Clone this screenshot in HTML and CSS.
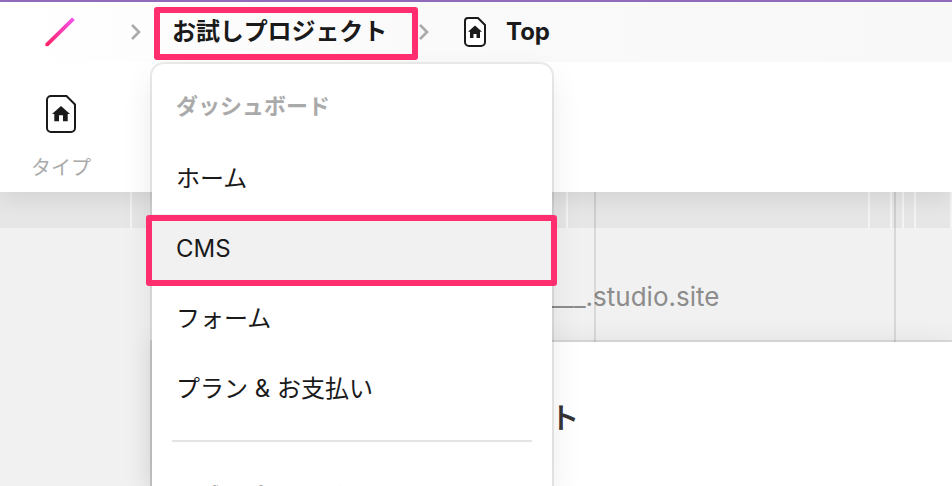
FILE: index.html
```
<!DOCTYPE html>
<html lang="ja">
<head>
<meta charset="utf-8">
<title>Studio</title>
<link rel="stylesheet" href="styles.css">
</head>
<body>
<div class="app">
  <header class="topbar">
    <svg class="logo" width="32" height="32" viewBox="0 0 32 32"><defs><linearGradient id="g" x1="0" y1="1" x2="1" y2="0"><stop offset="0" stop-color="#ff2060"/><stop offset="1" stop-color="#f552f4"/></linearGradient></defs><path d="M1.4 27.5 28 1.4l2.8 2.6L4.1 30.2 1.4 30z" fill="url(#g)"/></svg>
    <svg class="chevron" width="12" height="18" viewBox="0 0 12 18"><path d="m2 2 7 7-7 7"/></svg>
    <span class="project">お試しプロジェクト</span>
    <svg class="chevron second" width="12" height="18" viewBox="0 0 12 18"><path d="m2 2 7 7-7 7"/></svg>
    <svg class="page-icon" width="22" height="30" viewBox="0 0 22 30"><path class="sheet" d="M4 1h10l7 7v17a4 4 0 0 1-4 4H5a4 4 0 0 1-4-4V4a3 3 0 0 1 3-3z"/><path d="m11 8.5 7 6.2h-2v6.3h-3.5v-4h-3v4H6v-6.3H4z"/></svg>
    <span class="page-name">Top</span>
  </header>
  <section class="toolbar">
    <div class="type">
      <svg class="type-icon" width="30" height="38" viewBox="0 0 30 38"><path class="sheet" d="M5 1h15.5l8.5 8.5V33a4 4 0 0 1-4 4H5a4 4 0 0 1-4-4V5a4 4 0 0 1 4-4z"/><path d="m15 11 9 8h-2.3v7.3H17v-6h-4v6H8.3V19H6z"/></svg>
      <span class="type-label">タイプ</span>
    </div>
  </section>
  <main class="canvas">
    <div class="ruler"><i class="r1"></i><i class="r2"></i><i class="r3"></i><i class="r4"></i><i class="r5"></i><i class="r6"></i><i class="r7"></i></div>
    <div class="address">___.studio.site</div>
    <div class="guide g1"></div>
    <div class="guide g2"></div>
    <div class="artboard"><span>ト</span></div>
  </main>
</div>
<nav class="menu">
  <div class="heading">ダッシュボード</div>
  <div class="item">ホーム</div>
  <div class="item active">CMS</div>
  <div class="item">フォーム</div>
  <div class="item">プラン &amp; お支払い</div>
  <hr>
  <div class="heading next">お試しプロジェクト</div>
</nav>
<div class="mark mark-project"></div>
<div class="mark mark-cms"></div>
</body>
</html>
```
FILE: styles.css
```
* { box-sizing: border-box; }
body {
  margin: 0;
  width: 952px;
  height: 486px;
  overflow: hidden;
  position: relative;
  color: #1a1a1a;
  background: #f1f1f1;
  font-family: Inter, "Noto Sans CJK JP", sans-serif;
}
svg { display: block; flex: none; }
.app { height: 486px; display: flex; flex-direction: column; }
.topbar {
  height: 62px;
  flex: none;
  display: flex;
  align-items: center;
  padding-left: 44px;
  position: relative;
  z-index: 2;
  border-top: 2px solid #916bb9;
  background: linear-gradient(90deg, #fff 0, #fafafa 400px, #f8f8f8);
  white-space: nowrap;
}
.logo { margin-right: 54px; }
.chevron { fill: none; stroke: #aaa; stroke-width: 2.6; }
.project { width: 245px; padding-left: 30px; font-size: 24px; font-weight: 700; line-height: 36px; letter-spacing: -0.1px; }
.second { margin-left: 31px; }
.page-icon { margin-left: 34px; fill: #1a1a1a; }
.sheet { fill: #fff; stroke: #1a1a1a; stroke-width: 2; }
.page-name { margin-left: 20px; padding-bottom: 1px; font-size: 24px; font-weight: 700; }
.toolbar {
  height: 130px;
  flex: none;
  background: #fff;
  position: relative;
  z-index: 1;
  box-shadow: 0 4px 24px rgba(0, 0, 0, .1);
}
.type { width: 122px; padding-top: 33px; display: flex; flex-direction: column; align-items: center; }
.type-icon { fill: #1a1a1a; }
.type-label { margin-top: 20px; font-size: 20px; line-height: 30px; color: #aaa; }
.canvas { flex: 1; min-height: 0; position: relative; display: flex; flex-direction: column; }
.ruler { height: 36px; flex: none; background: #e6e6e6; position: relative; }
.ruler i { position: absolute; top: 0; width: 2px; height: 36px; background: #f4f4f4; }
.ruler .r1 { left: 130px; }
.ruler .r2 { left: 566px; }
.ruler .r3 { left: 868px; }
.ruler .r4 { left: 890px; }
.ruler .r5 { left: 902px; }
.ruler .r6 { left: 914px; }
.ruler .r7 { left: 950px; }
.address { height: 114px; flex: none; padding: 53px 0 0 550px; font-size: 26px; line-height: 32px; color: #8c8c8c; }
.guide { position: absolute; top: 0; width: 2px; height: 150px; background: rgba(0, 0, 0, .1); }
.g1 { left: 594px; }
.g2 { left: 894px; }
.artboard {
  flex: 1;
  min-height: 0;
  margin-left: 152px;
  padding: 55px 0 0 398px;
  background: #fff;
  color: #333;
  font-size: 29px;
  font-weight: 400;
  -webkit-text-stroke: 1px #333;
  line-height: 44px;
  box-shadow: 0 0 0 2px rgba(0, 0, 0, .09), 0 0 26px rgba(0, 0, 0, .08);
}
.menu {
  position: absolute;
  z-index: 2;
  left: 152px;
  top: 64px;
  width: 400px;
  height: 422px;
  overflow: hidden;
  border-radius: 12px 12px 0 0;
  background: #fff;
  box-shadow: 0 0 0 2px rgba(0, 0, 0, .08), 0 14px 32px rgba(0, 0, 0, .09);
}
.heading { height: 80px; padding: 2px 24px 0; font-size: 22px; font-weight: 700; line-height: 80px; color: #aaa; }
.item { height: 70px; padding-left: 24px; font-size: 24px; line-height: 70px; }
.active { background: #f1f1f1; }
hr { height: 2px; margin: 16px 20px 0; border: 0; background: #e4e4e4; }
.next { padding-top: 14px; }
.mark { position: absolute; z-index: 3; border: 6px solid #ff2e6f; border-radius: 3px; }
.mark-project { left: 154px; top: 7px; width: 264px; height: 53px; }
.mark-cms { left: 146px; top: 215px; width: 411px; height: 71px; }
```
